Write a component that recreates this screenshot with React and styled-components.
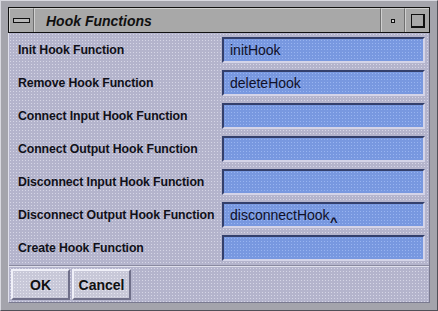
import React from "react";
import styled, { createGlobalStyle } from "styled-components";

const GlobalStyle = createGlobalStyle`
  html, body {
    margin: 0;
    padding: 0;
    background: #a8a8b0;
  }
  * {
    box-sizing: border-box;
  }
`;

const fields = [
  { label: "Init Hook Function", value: "initHook" },
  { label: "Remove Hook Function", value: "deleteHook" },
  { label: "Connect Input Hook Function", value: "" },
  { label: "Connect Output Hook Function", value: "" },
  { label: "Disconnect Input Hook Function", value: "" },
  { label: "Disconnect Output Hook Function", value: "disconnectHook", caret: true },
  { label: "Create Hook Function", value: "" },
];

function App() {
  return (
    <>
      <GlobalStyle />
      <Frame>
        <TitleBar>
          <MenuButton>
            <span />
          </MenuButton>
          <Title>Hook Functions</Title>
          <MinButton>
            <span />
          </MinButton>
          <MaxButton>
            <span />
          </MaxButton>
        </TitleBar>
        <Panel>
          <Form>
            {fields.map((f) => (
              <Row key={f.label}>
                <Label>{f.label}</Label>
                <Field>
                  <FieldText>
                    {f.value}
                    {f.caret && <Caret>^</Caret>}
                  </FieldText>
                </Field>
              </Row>
            ))}
          </Form>
          <ButtonBar>
            <Button>OK</Button>
            <Button>Cancel</Button>
          </ButtonBar>
        </Panel>
      </Frame>
    </>
  );
}

const dots = `
  background-color: #b4b4cc;
  background-image: radial-gradient(circle, #d6d6e6 0.7px, transparent 0.8px);
  background-size: 3px 3px;
`;

const Frame = styled.div`
  width: 438px;
  height: 311px;
  padding: 6px 7px 7px 7px;
  background-color: #a4a4ac;
  background-image: radial-gradient(circle, #c8c8d4 0.6px, transparent 0.7px);
  background-size: 2px 2px;
  border-top: 1px solid #d8d8e0;
  border-left: 1px solid #d8d8e0;
  border-right: 1px solid #505058;
  border-bottom: 1px solid #505058;
  display: flex;
  flex-direction: column;
`;

const TitleBar = styled.div`
  height: 26px;
  border: 1px solid #101010;
  display: flex;
  align-items: stretch;
  background-color: #a8a8a8;
  background-image: radial-gradient(circle, #8a8a8a 0.6px, transparent 0.7px);
  background-size: 2px 2px;
`;

const MenuButton = styled.div`
  width: 25px;
  border-right: 1px solid #707070;
  border-left: 1px solid #d0d0d0;
  border-top: 1px solid #d0d0d0;
  display: flex;
  align-items: center;
  justify-content: center;

  span {
    width: 17px;
    height: 5px;
    border: 1px solid #101010;
    background: #b8b8b8;
  }
`;

const Title = styled.div`
  flex: 1;
  padding-left: 11px;
  display: flex;
  align-items: center;
  font-family: "Liberation Sans", Arial, sans-serif;
  font-style: italic;
  font-weight: bold;
  font-size: 14px;
  color: #101010;
  border-left: 1px solid #d0d0d0;
  border-top: 1px solid #d0d0d0;
  border-right: 1px solid #707070;
`;

const MinButton = styled.div`
  width: 24px;
  border-left: 1px solid #d0d0d0;
  border-top: 1px solid #d0d0d0;
  border-right: 1px solid #707070;
  display: flex;
  align-items: center;
  justify-content: center;

  span {
    width: 4px;
    height: 4px;
    border: 1px solid #101010;
    background: #d0d0d0;
  }
`;

const MaxButton = styled.div`
  width: 24px;
  border-left: 1px solid #d0d0d0;
  border-top: 1px solid #d0d0d0;
  display: flex;
  align-items: center;
  justify-content: center;

  span {
    width: 14px;
    height: 14px;
    border: 1px solid #101010;
    border-right-width: 2px;
    border-bottom-width: 2px;
    background: #a8a8a8;
  }
`;

const Panel = styled.div`
  flex: 1;
  display: flex;
  flex-direction: column;
  ${dots}
  border-left: 1px solid #e0e0ec;
  border-right: 1px solid #7a7a90;
  border-bottom: 1px solid #7a7a90;
`;

const Form = styled.div`
  padding: 4px 4px 4px 9px;
  display: flex;
  flex-direction: column;
  gap: 7px;
  border-bottom: 1px solid #8a8aa0;
`;

const Row = styled.div`
  display: flex;
  align-items: center;
  height: 26px;
`;

const Label = styled.div`
  width: 204px;
  font-family: "Liberation Sans", Arial, sans-serif;
  font-weight: bold;
  font-size: 12.3px;
  letter-spacing: -0.1px;
  color: #101018;
`;

const Field = styled.div`
  width: 203px;
  height: 26px;
  padding: 0 0 0 6px;
  display: flex;
  align-items: center;
  font-family: "Liberation Sans", Arial, sans-serif;
  font-size: 14px;
  color: #101028;
  background-color: #7898e0;
  background-image: radial-gradient(circle, #98b4f0 0.6px, transparent 0.7px);
  background-size: 3px 3px;
  border-top: 2px solid #34406c;
  border-left: 2px solid #34406c;
  border-bottom: 2px solid #d4d4e8;
  border-right: 2px solid #d4d4e8;
`;

const FieldText = styled.span`
  position: relative;
`;

const Caret = styled.span`
  position: absolute;
  right: -8px;
  top: 7px;
  font-size: 13px;
  font-weight: bold;
`;

const ButtonBar = styled.div`
  flex: 1;
  display: flex;
  align-items: center;
  gap: 2px;
  padding: 0 2px;
  border-top: 1px solid #e0e0ec;
`;

const Button = styled.button`
  height: 31px;
  min-width: 59px;
  padding: 0 4px;
  font-family: "Liberation Sans", Arial, sans-serif;
  font-weight: bold;
  font-size: 14px;
  color: #101010;
  background-color: #c8c8d8;
  background-image: radial-gradient(circle, #e4e4ee 0.6px, transparent 0.7px);
  background-size: 3px 3px;
  border-top: 2px solid #f0f0f8;
  border-left: 2px solid #f0f0f8;
  border-bottom: 2px solid #70708a;
  border-right: 2px solid #70708a;
`;

export default App;
